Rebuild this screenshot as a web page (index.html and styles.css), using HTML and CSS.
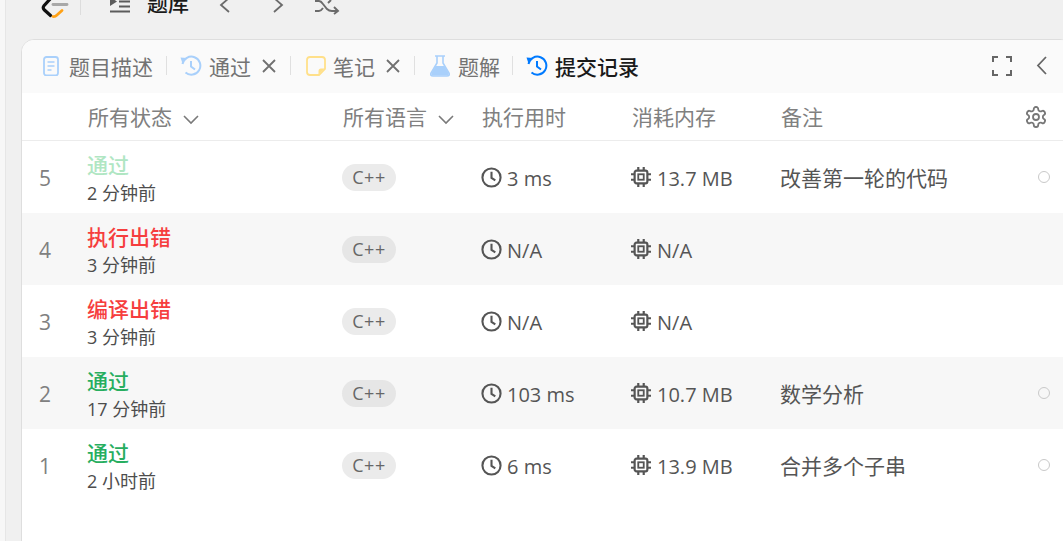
FILE: index.html
```html
<!DOCTYPE html>
<html lang="zh">
<head>
<meta charset="utf-8">
<title>提交记录</title>
<link rel="stylesheet" href="styles.css">
</head>
<body>
<div class="page">
  <header class="topbar">
    <svg class="logo" viewBox="40 -2 30 22" width="30" height="22"><path d="M51 -2 L43.800 6 Q42.500 8 44.200 9.800 L50.500 15.500" fill="none" stroke="#111" stroke-width="3.200" stroke-linecap="round"/><path d="M53 16.500 Q55 17 57 15 L62 10.500" fill="none" stroke="#ffa116" stroke-width="2.800" stroke-linecap="round"/><path d="M53 4.500H67" fill="none" stroke="#a8a8a8" stroke-width="2.800" stroke-linecap="round"/></svg>
    <span class="divider-top"></span>
    <svg class="list-icon" viewBox="0 0 22 16" width="22" height="16"><path d="M1 -1 L8 3.500 L1 8Z" fill="#5c5c5c"/><path d="M10 3.500H21M10 8.500H21M1 13.500H21" stroke="#5c5c5c" stroke-width="2" fill="none"/></svg>
    <span class="top-title">题库</span>
    <svg class="nav-one" viewBox="0 0 12 20" width="12" height="20"><path d="M10 1 L2 8 L10 15" fill="none" stroke="#6b6b6b" stroke-width="1.800"/></svg>
    <svg class="nav-two" viewBox="0 0 12 20" width="12" height="20"><path d="M2 1 L10 8 L2 15" fill="none" stroke="#6b6b6b" stroke-width="1.800"/></svg>
    <svg class="nav-three" viewBox="0 0 26 16" width="26" height="16"><path d="M1 2 H5 Q7 2 9 5 L13 10 Q15 12 18 12 H24 M20 8 L24 12 L20 15 M1 12 H5 Q7 12 9 9 M14 4 L17 1" fill="none" stroke="#6b6b6b" stroke-width="1.900"/></svg>
  </header>
  <main class="card">
    <nav class="tabs">
      <div class="tab">
        <svg class="tab-icon icon-doc" viewBox="0 0 16 20" width="16" height="20"><rect x="1" y="1" width="14" height="18.500" rx="2.500" fill="none" stroke="#a9d0fb" stroke-width="1.800"/><path d="M4.500 6H11.500M4.500 10H11.500M4.500 14H8.500" stroke="#a9d0fb" stroke-width="1.500"/></svg>
        <span>题目描述</span>
      </div>
      <span class="sep"></span>
      <div class="tab">
        <svg class="tab-icon" viewBox="0 0 22 22" width="22" height="22"><path d="M2.500 9 A9 9 0 1 1 5.500 17.500" fill="none" stroke="#a9d0fb" stroke-width="2"/><path d="M0.500 2.500 L7 3 L2.500 8.500Z" fill="#a9d0fb"/><path d="M11 6V11.500L15 14.500" fill="none" stroke="#a9d0fb" stroke-width="2"/></svg>
        <span>通过</span>
        <svg class="close" viewBox="0 0 14 14" width="14" height="14"><path d="M1 1L13 13M13 1L1 13" stroke="#707070" stroke-width="1.800"/></svg>
      </div>
      <span class="sep"></span>
      <div class="tab">
        <svg class="tab-icon icon-note" viewBox="0 0 20 20" width="20" height="20"><path d="M4 1H16Q19 1 19 4V13L13 19H4Q1 19 1 16V4Q1 1 4 1Z" fill="none" stroke="#ffe08a" stroke-width="1.800"/><path d="M12.500 18.500V15Q12.500 12.500 15 12.500H18.500Z" fill="#ffe08a"/></svg>
        <span>笔记</span>
        <svg class="close" viewBox="0 0 14 14" width="14" height="14"><path d="M1 1L13 13M13 1L1 13" stroke="#707070" stroke-width="1.800"/></svg>
      </div>
      <span class="sep"></span>
      <div class="tab tab-sol">
        <svg class="tab-icon icon-flask" viewBox="0 0 20 22" width="20" height="22"><path d="M5 1H15M7 1V8L1 18Q0 21 3 21H17Q20 21 19 18L13 8V1" fill="none" stroke="#a9d0fb" stroke-width="1.600"/><path d="M5.500 11H14.500L18.500 18Q19 20.500 17 20.500H3Q1 20.500 1.500 18Z" fill="#a9d0fb"/></svg>
        <span>题解</span>
      </div>
      <span class="sep"></span>
      <div class="tab tab-active">
        <svg class="tab-icon" viewBox="0 0 22 22" width="22" height="22"><path d="M2.500 9 A9 9 0 1 1 5.500 17.500" fill="none" stroke="#007aff" stroke-width="2"/><path d="M0.500 2.500 L7 3 L2.500 8.500Z" fill="#007aff"/><path d="M11 6V11.500L15 14.500" fill="none" stroke="#007aff" stroke-width="2"/></svg>
        <span>提交记录</span>
      </div>
      <div class="tab-tools">
        <svg viewBox="0 0 20 20" width="20" height="20"><path d="M1 6V1H6M14 1H19V6M19 14V19H14M6 19H1V14" fill="none" stroke="#666" stroke-width="2"/></svg>
        <svg viewBox="0 0 12 20" width="12" height="20"><path d="M10 1L2 9.500L10 18" fill="none" stroke="#666" stroke-width="1.800"/></svg>
      </div>
    </nav>
    <div class="table">
      <div class="row head">
        <div class="c-num"></div>
        <div class="c-status">所有状态<svg class="chev" viewBox="0 0 16 10" width="16" height="10"><path d="M1 1L8 8L15 1" fill="none" stroke="#7a7a7a" stroke-width="1.600"/></svg></div>
        <div class="c-lang">所有语言<svg class="chev" viewBox="0 0 16 10" width="16" height="10"><path d="M1 1L8 8L15 1" fill="none" stroke="#7a7a7a" stroke-width="1.600"/></svg></div>
        <div class="c-time">执行用时</div>
        <div class="c-mem">消耗内存</div>
        <div class="c-note">备注</div>
        <div class="c-end">
          <svg class="gear" viewBox="0 0 24 24" width="24" height="24"><path d="M12.220 2h-.44a2 2 0 0 0-2 2v.18a2 2 0 0 1-1 1.730l-.43.25a2 2 0 0 1-2 0l-.15-.08a2 2 0 0 0-2.730.73l-.22.38a2 2 0 0 0 .73 2.730l.15.1a2 2 0 0 1 1 1.720v.51a2 2 0 0 1-1 1.740l-.15.09a2 2 0 0 0-.73 2.730l.22.38a2 2 0 0 0 2.730.73l.15-.08a2 2 0 0 1 2 0l.43.25a2 2 0 0 1 1 1.730V20a2 2 0 0 0 2 2h.44a2 2 0 0 0 2-2v-.18a2 2 0 0 1 1-1.730l.43-.25a2 2 0 0 1 2 0l.15.08a2 2 0 0 0 2.730-.73l.22-.39a2 2 0 0 0-.73-2.730l-.15-.08a2 2 0 0 1-1-1.740v-.5a2 2 0 0 1 1-1.740l.15-.09a2 2 0 0 0 .73-2.730l-.22-.38a2 2 0 0 0-2.730-.73l-.15.08a2 2 0 0 1-2 0l-.43-.25a2 2 0 0 1-1-1.730V4a2 2 0 0 0-2-2z" fill="none" stroke="#777" stroke-width="1.800"/><circle cx="12" cy="12" r="3" fill="none" stroke="#777" stroke-width="1.800"/></svg>
        </div>
      </div>

      <div class="row">
        <div class="c-num">5</div>
        <div class="c-status"><div class="st st-faded">通过</div><div class="ago">2 分钟前</div></div>
        <div class="c-lang"><span class="pill">C++</span></div>
        <div class="c-time metric"><svg class="m-icon" viewBox="0 0 22 22" width="21" height="21"><circle cx="11" cy="11" r="9.500" fill="none" stroke="#555" stroke-width="2.200"/><path d="M11 5V11.500L15 14" fill="none" stroke="#555" stroke-width="2.200"/></svg>3 ms</div>
        <div class="c-mem metric"><svg class="m-icon m-chip" viewBox="0 0 22 22" width="20" height="20"><rect x="4" y="4" width="14" height="14" rx="2" fill="none" stroke="#555" stroke-width="2.400"/><rect x="8" y="8" width="6" height="6" fill="none" stroke="#555" stroke-width="2"/><path d="M8 0V4M14 0V4M8 18V22M14 18V22M0 8H4M0 14H4M18 8H22M18 14H22" stroke="#555" stroke-width="2.400"/></svg>13.7 MB</div>
        <div class="c-note">改善第一轮的代码</div>
        <div class="c-end"><span class="dot"></span></div>
      </div>

      <div class="row alt">
        <div class="c-num">4</div>
        <div class="c-status"><div class="st st-err">执行出错</div><div class="ago">3 分钟前</div></div>
        <div class="c-lang"><span class="pill">C++</span></div>
        <div class="c-time metric"><svg class="m-icon" viewBox="0 0 22 22" width="21" height="21"><circle cx="11" cy="11" r="9.500" fill="none" stroke="#555" stroke-width="2.200"/><path d="M11 5V11.500L15 14" fill="none" stroke="#555" stroke-width="2.200"/></svg>N/A</div>
        <div class="c-mem metric"><svg class="m-icon m-chip" viewBox="0 0 22 22" width="20" height="20"><rect x="4" y="4" width="14" height="14" rx="2" fill="none" stroke="#555" stroke-width="2.400"/><rect x="8" y="8" width="6" height="6" fill="none" stroke="#555" stroke-width="2"/><path d="M8 0V4M14 0V4M8 18V22M14 18V22M0 8H4M0 14H4M18 8H22M18 14H22" stroke="#555" stroke-width="2.400"/></svg>N/A</div>
        <div class="c-note"></div>
        <div class="c-end"></div>
      </div>

      <div class="row">
        <div class="c-num">3</div>
        <div class="c-status"><div class="st st-err">编译出错</div><div class="ago">3 分钟前</div></div>
        <div class="c-lang"><span class="pill">C++</span></div>
        <div class="c-time metric"><svg class="m-icon" viewBox="0 0 22 22" width="21" height="21"><circle cx="11" cy="11" r="9.500" fill="none" stroke="#555" stroke-width="2.200"/><path d="M11 5V11.500L15 14" fill="none" stroke="#555" stroke-width="2.200"/></svg>N/A</div>
        <div class="c-mem metric"><svg class="m-icon m-chip" viewBox="0 0 22 22" width="20" height="20"><rect x="4" y="4" width="14" height="14" rx="2" fill="none" stroke="#555" stroke-width="2.400"/><rect x="8" y="8" width="6" height="6" fill="none" stroke="#555" stroke-width="2"/><path d="M8 0V4M14 0V4M8 18V22M14 18V22M0 8H4M0 14H4M18 8H22M18 14H22" stroke="#555" stroke-width="2.400"/></svg>N/A</div>
        <div class="c-note"></div>
        <div class="c-end"></div>
      </div>

      <div class="row alt">
        <div class="c-num">2</div>
        <div class="c-status"><div class="st st-ok">通过</div><div class="ago">17 分钟前</div></div>
        <div class="c-lang"><span class="pill">C++</span></div>
        <div class="c-time metric"><svg class="m-icon" viewBox="0 0 22 22" width="21" height="21"><circle cx="11" cy="11" r="9.500" fill="none" stroke="#555" stroke-width="2.200"/><path d="M11 5V11.500L15 14" fill="none" stroke="#555" stroke-width="2.200"/></svg>103 ms</div>
        <div class="c-mem metric"><svg class="m-icon m-chip" viewBox="0 0 22 22" width="20" height="20"><rect x="4" y="4" width="14" height="14" rx="2" fill="none" stroke="#555" stroke-width="2.400"/><rect x="8" y="8" width="6" height="6" fill="none" stroke="#555" stroke-width="2"/><path d="M8 0V4M14 0V4M8 18V22M14 18V22M0 8H4M0 14H4M18 8H22M18 14H22" stroke="#555" stroke-width="2.400"/></svg>10.7 MB</div>
        <div class="c-note">数学分析</div>
        <div class="c-end"><span class="dot"></span></div>
      </div>

      <div class="row">
        <div class="c-num">1</div>
        <div class="c-status"><div class="st st-ok">通过</div><div class="ago">2 小时前</div></div>
        <div class="c-lang"><span class="pill">C++</span></div>
        <div class="c-time metric"><svg class="m-icon" viewBox="0 0 22 22" width="21" height="21"><circle cx="11" cy="11" r="9.500" fill="none" stroke="#555" stroke-width="2.200"/><path d="M11 5V11.500L15 14" fill="none" stroke="#555" stroke-width="2.200"/></svg>6 ms</div>
        <div class="c-mem metric"><svg class="m-icon m-chip" viewBox="0 0 22 22" width="20" height="20"><rect x="4" y="4" width="14" height="14" rx="2" fill="none" stroke="#555" stroke-width="2.400"/><rect x="8" y="8" width="6" height="6" fill="none" stroke="#555" stroke-width="2"/><path d="M8 0V4M14 0V4M8 18V22M14 18V22M0 8H4M0 14H4M18 8H22M18 14H22" stroke="#555" stroke-width="2.400"/></svg>13.9 MB</div>
        <div class="c-note">合并多个子串</div>
        <div class="c-end"><span class="dot"></span></div>
      </div>
    </div>
  </main>
</div>
</body>
</html>
```

FILE: styles.css
```css
* { box-sizing: border-box; }
html, body { margin: 0; height: 100%; overflow: hidden; }
body {
  background: #f7f7f7;
  font-family: "Open Sans", "Noto Sans CJK SC", sans-serif;
  color: #555;
}
.page {
  width: 1058px;
  height: 541px;
  margin-left: 5px;
  background: #f0f0f0;
  border-left: 1px solid #e6e6e6;
  padding-left: 15px;
  display: flex;
  flex-direction: column;
}
.topbar {
  height: 39px;
  flex: none;
  display: flex;
  align-items: flex-start;
  padding-left: 19px;
}
.logo { flex: none; margin-top: -2px; }
.divider-top { width: 1px; height: 15px; background: #ddd; margin-left: 10px; }
.list-icon { margin-left: 28px; margin-top: -2px; flex: none; }
.top-title {
  margin-left: 16px;
  margin-top: -9px;
  font-size: 21px;
  line-height: 24px;
  color: #1a1a1a;
  font-weight: 500;
  white-space: nowrap;
}
.nav-one { margin-left: 30px; margin-top: -3px; flex: none; }
.nav-two { margin-left: 41px; margin-top: -3px; flex: none; }
.nav-three { margin-left: 30px; margin-top: -1px; flex: none; }

.card {
  flex: 1;
  margin-bottom: -20px;
  margin-right: -10px;
  background: #fff;
  border: 1px solid #dedede;
  border-radius: 13px 13px 0 0;
  overflow: hidden;
  display: flex;
  flex-direction: column;
}
.tabs {
  height: 53px;
  flex: none;
  background: #fafafa;
  display: flex;
  align-items: center;
  padding-left: 21px;
  padding-bottom: 2px;
  font-size: 21px;
  color: #737373;
}
.tab { display: flex; align-items: center; gap: 7px; white-space: nowrap; }
.tab-icon { flex: none; }
.icon-doc { margin-right: 3px; }
.icon-note { margin-left: 2px; }
.icon-flask { margin-left: 2px; margin-right: 1px; }
.tab-sol { margin-right: -1px; }
.tab-active { color: #1a1a1a; font-weight: 500; }
.close { margin-left: 4px; margin-right: 1px; flex: none; }
.sep { width: 1px; height: 19px; background: #e0e0e0; margin: 0 13px; flex: none; }
.tab-tools {
  margin-left: auto;
  display: flex;
  align-items: center;
  gap: 24px;
  padding-right: 24px;
}

.table { display: flex; flex-direction: column; }
.row {
  height: 72px;
  display: flex;
  align-items: center;
  font-size: 20px;
  color: #555;
}
.row.alt { background: #f7f7f7; }
.row.head {
  height: 48px;
  padding-bottom: 2px;
  border-bottom: 1px solid #ececec;
  font-size: 21px;
  color: #808080;
}
.c-num { width: 65px; padding-left: 17px; padding-top: 2px; flex: none; color: #808080; font-size: 21px; }
.c-status { width: 255px; flex: none; }
.head .c-status { padding-left: 1px; }
.c-lang { width: 139px; flex: none; }
.head .c-lang { padding-left: 1px; }
.c-time { width: 150px; flex: none; }
.head .c-time { padding-left: 1px; }
.c-mem { width: 149px; flex: none; }
.head .c-mem { padding-left: 1px; }
.c-note { flex: 1; font-size: 21px; white-space: nowrap; }
.head .c-note { padding-left: 1px; }
.c-end { width: 49px; flex: none; display: flex; }
.gear { margin-left: 1px; margin-top: 2px; }
.chev { margin-left: 11px; }
.st { font-size: 21px; line-height: 28px; font-weight: 500; margin-top: 2px; margin-bottom: 1px; }
.st-faded { color: #b0e6c3; }
.st-err { color: #f63e3e; }
.st-ok { color: #27ae60; }
.ago { font-size: 18px; line-height: 26px; color: #4d4d4d; }
.pill {
  display: inline-flex;
  align-items: center;
  justify-content: center;
  width: 54px;
  height: 27px;
  border-radius: 14px;
  background: #ebebeb;
  font-size: 18px;
  letter-spacing: 0.5px;
  color: #666;
}
.row.alt .pill { background: #e6e6e6; }
.metric { display: flex; align-items: center; gap: 5px; padding-top: 2px; }
.m-icon { flex: none; margin-top: -2px; }
.m-chip { margin-right: 1px; }
.dot {
  width: 12px;
  height: 12px;
  margin-left: 15px;
  border: 1px solid #c9c9c9;
  border-radius: 50%;
  display: block;
}
```
